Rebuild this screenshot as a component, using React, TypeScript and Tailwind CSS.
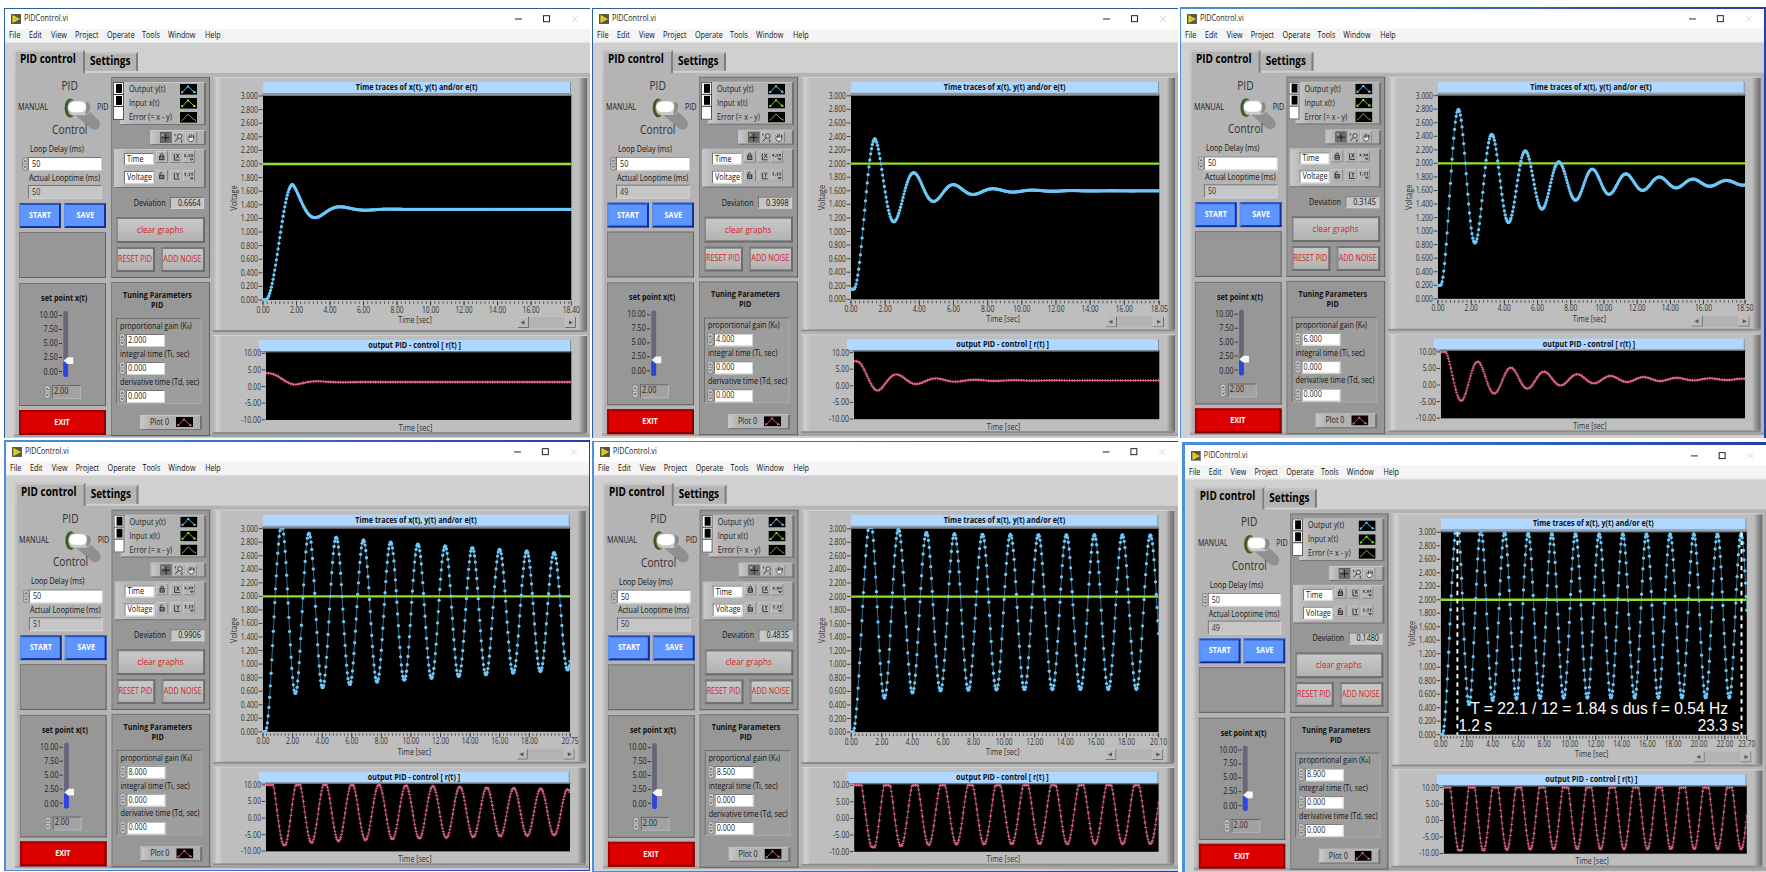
import React from "react";

type Run = {
  id: string;
  loop: string;
  deviation: string;
  gain: string;
  k: number;
  tMax: number;
  final: number;
  start: number;
  delay: number;
  peakTime: number;
  period: number;
  amp: number;
  decay: number;
  extra: number;
  annotated?: boolean;
};

const RUNS: Run[] = [
  { id: "a", loop: "50", deviation: "0.6664", gain: "2.000", k: 2, tMax: 18.4, final: 1.333, start: 0, delay: 0.15, peakTime: 1.77, period: 3.0, amp: 0.367, decay: 0.78, extra: 0 },
  { id: "b", loop: "49", deviation: "0.3998", gain: "4.000", k: 4, tMax: 18.05, final: 1.6, start: 0.15, delay: 0.15, peakTime: 1.41, period: 2.32, amp: 0.77, decay: 0.463, extra: 0 },
  { id: "c", loop: "50", deviation: "0.3145", gain: "6.000", k: 6, tMax: 18.5, final: 1.71, start: 0.2, delay: 0.15, peakTime: 1.24, period: 2.02, amp: 1.09, decay: 0.207, extra: 0 },
  { id: "d", loop: "51", deviation: "0.9906", gain: "8.000", k: 8, tMax: 20.75, final: 1.775, start: 0, delay: 0.15, peakTime: 1.27, period: 1.84, amp: 1.14, decay: 0.0145, extra: 0.14 },
  { id: "e", loop: "50", deviation: "0.4835", gain: "8.500", k: 8.5, tMax: 20.1, final: 1.77, start: 0, delay: 0.1, peakTime: 1.26, period: 1.83, amp: 1.15, decay: 0.0005, extra: 0.2 },
  { id: "f", loop: "49", deviation: "0.1480", gain: "8.900", k: 8.9, tMax: 23.7, final: 1.76, start: 0, delay: 0.1, peakTime: 1.266, period: 1.833, amp: 1.22, decay: 0.0002, extra: 0.16, annotated: true },
];

function response(r: Run, t: number) {
  if (t < r.delay) return r.start;
  if (t < r.peakTime) {
    const peak = r.final + r.amp + r.extra;
    const u = (t - r.delay) / (r.peakTime - r.delay);
    return r.start + ((peak - r.start) * (1 - Math.cos(Math.PI * u))) / 2;
  }
  const d = t - r.peakTime;
  const a = r.amp * Math.exp(-r.decay * d) + r.extra * Math.exp(-d / 1.8);
  return r.final + a * Math.cos((2 * Math.PI * d) / r.period);
}

function samples(r: Run) {
  const out: { t: number; y: number; u: number }[] = [];
  const n = Math.round(r.tMax / 0.05);
  for (let i = 0; i <= n; i++) {
    const t = i * 0.05;
    const y = Math.min(3.02, response(r, t));
    out.push({ t, y, u: Math.max(-10, Math.min(10, r.k * (2 - y))) });
  }
  return out;
}

const sans = "font-['Open_Sans','Noto_Sans',sans-serif]";

function Txt({ children, className = "origin-left text-[8.5px]" }: { children: React.ReactNode; className?: string }) {
  return <span className={`block w-max scale-x-[0.85] whitespace-nowrap leading-none ${className}`}>{children}</span>;
}

function TimeChart({ run }: { run: Run }) {
  const data = samples(run);
  const X = (t: number) => 34 + (t / run.tMax) * 308.3;
  const Y = (v: number) => 5 + (1 - v / 3) * 204;
  const rows = Array.from({ length: 16 }, (_, i) => 3 - i * 0.2);
  const labels: number[] = [];
  for (let t = 0; run.tMax - t >= 1; t += 2) labels.push(t);
  labels.push(run.tMax);
  const minor: number[] = [];
  for (let t = 0; t <= run.tMax; t += 0.25) minor.push(t);
  return (
    <svg className="relative z-10 -mt-[3px] block shrink-0 overflow-visible" width="358" height="236" viewBox="0 0 358 236">
      <defs>
        <clipPath id={`time-${run.id}`}>
          <rect x="33.5" y="4.5" width="309" height="205" />
        </clipPath>
      </defs>
      <rect x="33" y="3.5" width="310" height="1.5" fill="#777" />
      <rect x="34" y="5" width="308.3" height="204" fill="#000" />
      <g fontSize="8.4" fill="#303030">
        {rows.map((v) => (
          <g key={v}>
            <text x="29" y={Y(v) + 3} textAnchor="end" textLength="17.3" lengthAdjust="spacingAndGlyphs">{v.toFixed(3)}</text>
            <path d={`M29.8 ${Y(v)}h3.6`} stroke="#333" strokeWidth="0.9" />
          </g>
        ))}
        {labels.map((t) => (
          <g key={t}>
            <text x={X(t)} y="221.5" textAnchor="middle" textLength={t < 10 ? 13.2 : 17} lengthAdjust="spacingAndGlyphs">{t.toFixed(2)}</text>
            <path d={`M${X(t)} 210v4.6`} stroke="#333" strokeWidth="0.9" />
          </g>
        ))}
        {minor.map((t) => (
          <path key={t} d={`M${X(t)} 210.5v2.4`} stroke="#333" strokeWidth="0.8" />
        ))}
        <text x="186" y="232" textAnchor="middle" textLength="33.5" lengthAdjust="spacingAndGlyphs">Time [sec]</text>
        <text transform="translate(8 107) rotate(-90)" textAnchor="middle" textLength="25.5" lengthAdjust="spacingAndGlyphs">Voltage</text>
      </g>
      <g clipPath={`url(#time-${run.id})`}>
        <path d="M34 73h308.3" stroke="#92e02c" strokeWidth="2.3" />
        <polyline points={data.map((p) => `${X(p.t)},${Y(p.y)}`).join(" ")} fill="none" stroke="#6ccbf8" strokeWidth="0.9" strokeOpacity="0.6" />
        {data.map((p) => (
          <circle key={p.t} cx={X(p.t)} cy={Y(p.y)} r="1.65" fill="#6cc8f8" />
        ))}
      </g>
      {run.annotated && (
        <g fill="#fff" className="font-['Liberation_Sans',Arial,sans-serif]" fontSize="16">
          <path d="M50.6 5v204M337 5v204" stroke="#fff" strokeWidth="1.9" strokeDasharray="4.6 3.8" />
          <text x="63.5" y="187.8" textLength="260" lengthAdjust="spacingAndGlyphs">T = 22.1 / 12 = 1.84 s dus f = 0.54 Hz</text>
          <text x="51.8" y="205.500" textLength="33.5" lengthAdjust="spacingAndGlyphs">1.2 s</text>
          <text x="293" y="205.500" textLength="42" lengthAdjust="spacingAndGlyphs">23.3 s</text>
        </g>
      )}
    </svg>
  );
}

function ControlChart({ run }: { run: Run }) {
  const data = samples(run);
  const X = (t: number) => 37 + (t / run.tMax) * 305.3;
  const Y = (v: number) => 3.3 + ((10 - v) / 20) * 66.5;
  return (
    <svg className="relative z-10 -mt-[1.500px] block shrink-0 overflow-visible" width="358" height="84" viewBox="0 0 358 84">
      <defs>
        <clipPath id={`ctl-${run.id}`}>
          <rect x="37" y="2" width="305.3" height="68" />
        </clipPath>
      </defs>
      <rect x="36" y="1" width="307" height="1.5" fill="#777" />
      <rect x="37" y="2.3" width="305.3" height="67.7" fill="#000" />
      <g fontSize="8.4" fill="#303030">
        {[10, 5, 0, -5, -10].map((v) => (
          <g key={v}>
            <text x="32" y={Y(v) + 3} textAnchor="end" textLength={v === 10 ? 17 : v === -10 ? 20 : v === -5 ? 16.3 : 13.2} lengthAdjust="spacingAndGlyphs">{v.toFixed(2)}</text>
            <path d={`M32.8 ${Y(v)}h3.4`} stroke="#333" strokeWidth="0.9" />
          </g>
        ))}
        <text x="186.5" y="80.500" textAnchor="middle" textLength="33.5" lengthAdjust="spacingAndGlyphs">Time [sec]</text>
      </g>
      <g clipPath={`url(#ctl-${run.id})`} stroke="#e0628f" fill="none">
        <polyline points={data.map((p) => `${X(p.t)},${Y(p.u)}`).join(" ")} strokeWidth="1.2" strokeOpacity="0.7" />
        <path d={data.map((p) => `M${X(p.t) - 1.5} ${Y(p.u)}h3${Math.round(p.t * 20) % 3 === 0 ? `m-1.5 -1.6v3.2` : ""}`).join("")} strokeWidth="0.9" />
      </g>
    </svg>
  );
}

function PlotGlyph({ color, marks = true }: { color: string; marks?: boolean }) {
  return (
    <svg className="block shrink-0" width="17.4" height="10.6" viewBox="0 0 17.4 10.6">
      <rect width="17.4" height="10.6" fill="#000" />
      <path d="M1.4 8.6L3.2 7.6L8 2.2L13 7L16 8.6" fill="none" stroke={color} strokeWidth="0.9" />
      {marks && <path d="M1.2 7.2h2v2h-2zM7 1.4h2v2h-2zM13 7h2v2h-2z" fill={color} />}
    </svg>
  );
}

function Toggle() {
  return (
    <svg className="block shrink-0 overflow-visible" width="27" height="20" viewBox="0 0 27 20">
      <path d="M10 16L26 30C30 33 36 32 36 26C36 22 31 19 24 12Z" fill="#8c8c8c" fillOpacity="0.9" />
      <ellipse cx="6.2" cy="10" rx="5.6" ry="9.4" fill="#3c5a24" />
      <ellipse cx="8" cy="10" rx="4.6" ry="7.8" fill="#8fa07e" />
      <rect x="4" y="3.2" width="22.500" height="14" rx="6.500" fill="#c9c9c9" />
      <rect x="4.300" y="3.600" width="17.500" height="10.600" rx="5.300" fill="#fff" />
      <path d="M21.500 3.800q5.500 1 4.700 6.400t-5.200 6q2.500-6 .5-12.400z" fill="#8a8a8a" />
    </svg>
  );
}

function Spinner() {
  return (
    <svg className="block shrink-0" width="6.5" height="14" viewBox="0 0 6.5 14">
      <rect x="0.4" y="0.4" width="5.7" height="13.200" rx="2.8" fill="#c4c4c4" stroke="#777" strokeWidth="0.8" />
      <path d="M0.6 7h5.300" stroke="#777" strokeWidth="0.7" />
      <path d="M2 5L3.250 3.200L4.500 5M2 9L3.250 10.800L4.500 9" fill="none" stroke="#444" strokeWidth="0.8" />
    </svg>
  );
}

const sunken = "border border-t-[#747474] border-l-[#747474] border-b-[#d2d2d2] border-r-[#d2d2d2]";
const panel = "border-[1.5px] border-t-[#747474] border-l-[#7c7c7c] border-b-[#616161] border-r-[#616161] bg-[#979797]";
const tray = "bg-gradient-to-r from-[#c9c9c9] via-[#b4b4b4] via-15% to-[#b0b0b0] border border-t-[#c8c8c8] border-l-[#c4c4c4] border-b-[#737373] border-r-2 border-r-[#737373]";
const grayButton = "flex items-center justify-center border-2 border-b-[#6c6c6c] border-l-[#8a8a8a] border-r-[#6c6c6c] border-t-[#777] bg-gradient-to-b from-[#c9c9c9] to-[#b2b2b2]";

function NumberField({ label, value }: { label: React.ReactNode; value: string }) {
  return (
    <div className="flex flex-col">
      <div className="flex h-[15px] items-center pl-[3px] text-[#111]"><Txt>{label}</Txt></div>
      <div className="flex h-[13px] items-center pl-[1.500px]">
        <Spinner />
        <div className={`ml-[1px] flex h-[13px] w-[39px] items-center bg-white pl-[1px] text-[#222] ${sunken}`}><Txt>{value}</Txt></div>
      </div>
    </div>
  );
}

function SwitchColumn({ run }: { run: Run }) {
  return (
    <div className="flex w-[87px] flex-col">
      <div className="flex h-[25px] items-center justify-center pl-[14px] text-[#333]"><Txt className="text-[12px]">PID</Txt></div>
      <div className="flex h-[19px] items-center text-[#222]">
        <div className="-ml-[1px] w-[46px] shrink-0"><Txt className="origin-left scale-x-[0.9] text-[8.500px]">MANUAL</Txt></div>
        <Toggle />
        <div className="ml-[6px] w-[12px]"><Txt>PID</Txt></div>
      </div>
      <div className="relative flex h-[25px] items-center justify-center pl-[14px] text-[#333]"><Txt className="text-[12px]">Control</Txt></div>
      <div className="flex h-[15px] items-center pl-[10.500px] text-[#111]"><Txt>Loop Delay (ms)</Txt></div>
      <div className="flex h-[13.500px] items-center pl-[2.500px]">
        <Spinner />
        <div className={`flex h-[13.500px] w-[74px] items-center bg-white pl-[3px] text-[#222] ${sunken}`}><Txt>50</Txt></div>
      </div>
      <div className="flex h-[14.500px] items-center pl-[10px] text-[#111]"><Txt>Actual Looptime (ms)</Txt></div>
      <div className={`ml-[9px] flex h-[13.500px] w-[74px] items-center bg-[#c6c6c6] pl-[3px] text-[#333] ${sunken}`}><Txt>{run.loop}</Txt></div>
      <div className="mt-[4px] flex justify-between">
        {["START", "SAVE"].map((s) => (
          <div key={s} className="flex h-[25.500px] w-[42px] items-center justify-center border-2 border-b-[#12309c] border-l-[#5a8ff0] border-r-[#12309c] border-t-[#2a50c0] bg-[#5f95ff] font-bold text-white">
            <Txt className="text-[8.500px]">{s}</Txt>
          </div>
        ))}
      </div>
      <div className={`mt-[3.500px] h-[46.500px] ${panel}`} />
      <div className={`mt-[4.500px] flex h-[123.500px] flex-col ${panel}`}>
        <div className="flex h-[27.500px] items-center justify-center pl-[4px] pt-[1px] font-bold text-[#111]"><Txt className="text-[8.500px]">set point x(t)</Txt></div>
        <div className="flex h-[66px] shrink-0 pl-[20px]">
          <div className="flex w-[22px] flex-col items-end justify-between pb-[1px] text-[#222]">
            {["10.00", "7.50", "5.00", "2.50", "0.00"].map((v) => (
              <div key={v} className="flex items-center gap-[1px]"><Txt className="origin-right text-[8.500px]">{v}</Txt><i className="h-px w-[3px] bg-[#333]" /></div>
            ))}
          </div>
          <svg className="ml-[1px] block overflow-visible" width="12" height="66" viewBox="0 0 12 66">
            <rect x="0.3" y="0" width="4.800" height="66" rx="2.200" fill="#67677c" />
            <rect x="0.3" y="50" width="4.800" height="16" rx="2.200" fill="#2b45dd" />
            <path d="M0.500 49.800L4.500 46.200H10.300V53H4.500Z" fill="#f6f6f6" />
          </svg>
        </div>
        <div className="mt-[7.500px] flex items-center pl-[24px]">
          <Spinner />
          <div className="ml-[1px] flex h-[14px] w-[29px] items-center border border-b-[#b5b5b5] border-l-[#666] border-r-[#b5b5b5] border-t-[#666] bg-[#a2a2a2] pl-[1px] text-[#222]"><Txt>2.00</Txt></div>
        </div>
      </div>
      <div className="mt-[3.500px] flex h-[25px] items-center justify-center border-2 border-b-[#7c0000] border-l-[#a80000] border-r-[#7c0000] border-t-[#a80000] bg-[#dc0000] font-bold text-white">
        <Txt className="text-[8.500px]">EXIT</Txt>
      </div>
    </div>
  );
}

function ToolIcon({ kind }: { kind: "cross" | "zoom" | "hand" | "lock" | "unlock" | "x" | "y" | "fx" | "fy" }) {
  return (
    <svg className="block shrink-0" width="11.500" height="11.500" viewBox="0 0 12 12">
      <rect width="12" height="12" fill={kind === "cross" ? "#6c6c6c" : "#b6b6b6"} />
      <path d="M0 12V0H12" fill="none" stroke={kind === "cross" ? "#4a4a4a" : "#d8d8d8"} strokeWidth="1" />
      <path d="M12 0V12H0" fill="none" stroke="#808080" strokeWidth="1" />
      <g fill="none" stroke="#222" strokeWidth="0.900">
        {kind === "cross" && <path d="M6 2v8M2 6h8" stroke="#111" />}
        {kind === "zoom" && <><circle cx="7" cy="4.500" r="2.300" stroke="#334" fill="#c8c8e8" /><path d="M5.300 6.300L2 10M9 8v3M2 2v2" /></>}
        {kind === "hand" && <path d="M2.500 4l2.500 2.500V3.500M5 6V2.500M7 6V2.500M9 6V3.500V8L7.500 10H5L2.500 6.500" fill="#e8e8e8" strokeWidth="0.700" />}
        {kind === "lock" && <><path d="M4.700 5.500V3.500q1.300-2 2.600 0v2" /><rect x="3.800" y="5.500" width="4.400" height="3.600" fill="#999" /><path d="M4 7.300h4" strokeWidth="0.500" /></>}
        {kind === "unlock" && <><path d="M4.200 5.500V3.500q1.300-2 2.600 0" /><rect x="3.800" y="5.500" width="4.400" height="3.600" fill="#999" /><path d="M4 7.300h4" strokeWidth="0.500" /></>}
        {(kind === "x" || kind === "y") && <path d="M4.500 3v6.500H10" />}
        {kind === "x" && <path d="M6.500 3l3 4.500M9.500 3l-3 4.500" />}
        {kind === "y" && <path d="M6.500 3l1.500 2l1.500-2M8 5v3" />}
        {kind === "fx" && <path d="M1.500 3.500l1.500 2.500M3 3.500l-1.500 2.500M4.300 6h1M6 3.500l1.500 2.500M7.500 3.500l-1.500 2.500M8.700 3.500l1.500 2.500M10.200 3.500l-1.500 2.500M7.500 8.300h3l-1.500 1.500z" strokeWidth="0.800" />}
        {kind === "fy" && <path d="M1.500 3.500h1.600l-.8 1v2M4.300 6h1M6 3.500h1.600l-.8 1v2M8.700 3.500h1.600l-.8 1v2M7.500 8.300h3l-1.500 1.500z" strokeWidth="0.800" />}
      </g>
      {(kind === "x" || kind === "y" || kind === "cross") && <rect x="1.500" y="2" width="2" height="2" fill="#7be23a" />}
    </svg>
  );
}

function MiddleColumn({ run }: { run: Run }) {
  return (
    <div className="mt-[3.500px] flex w-[99px] flex-col">
      <div className={`flex h-[201.500px] flex-col ${panel}`}>
        <div className="mt-[4.500px] flex h-[43px]">
          <div className="z-10 ml-[1.500px] flex h-[38px] w-[11px] shrink-0 flex-col border border-[#555] bg-white">
            <div className="flex h-[12px] items-center justify-center border-b border-[#333]"><i className="h-[9px] w-[6px] bg-black" /></div>
            <div className="flex h-[12px] items-center justify-center border-b border-[#333]"><i className="h-[9px] w-[6px] bg-black" /></div>
          </div>
          <div className={`-ml-[4px] flex h-[43px] w-[86px] shrink-0 flex-col justify-center gap-[3.500px] pl-[8px] text-[#222] ${tray}`}>
            {[["Output y(t)", "#6cc8f8"], ["Input x(t)", "#8be02c"], ["Error (= x - y)", "#a8a468"]].map(([n, c], i) => (
              <div key={n} className="flex h-[10.600px] items-center">
                <div className="w-[51px] shrink-0"><Txt>{n}</Txt></div>
                <PlotGlyph color={c} marks={i < 2} />
              </div>
            ))}
          </div>
        </div>
        <div className={`ml-[38.500px] mt-[5px] flex h-[14.500px] w-[56px] items-center gap-[1.200px] pl-[9px] ${tray}`}>
          <ToolIcon kind="cross" /><ToolIcon kind="zoom" /><ToolIcon kind="hand" />
        </div>
        <div className={`ml-[2.500px] mt-[4px] flex h-[39px] w-[92px] flex-col justify-center gap-[6px] pl-[9px] ${tray}`}>
          <div className="flex items-start gap-[2px]">
            <div className={`flex h-[12.500px] w-[30px] items-center bg-white pl-[1.500px] text-[#111] ${sunken}`}><Txt>Time</Txt></div>
            <div className="-mt-[1.500px] flex gap-[2px]"><ToolIcon kind="lock" /><ToolIcon kind="x" /><ToolIcon kind="fx" /></div>
          </div>
          <div className="flex items-start gap-[2px]">
            <div className={`flex h-[12.500px] w-[30px] items-center bg-white pl-[1.500px] text-[#111] ${sunken}`}><Txt>Voltage</Txt></div>
            <div className="-mt-[1.500px] flex gap-[2px]"><ToolIcon kind="unlock" /><ToolIcon kind="y" /><ToolIcon kind="fy" /></div>
          </div>
        </div>
        <div className="mt-[9.500px] flex h-[12px] items-center justify-end pr-[5px] text-[#111]">
          <Txt className="origin-right text-[8.500px]">Deviation</Txt>
          <div className={`ml-[4px] flex h-[12px] w-[34px] items-center justify-end bg-[#c6c6c6] pr-[2px] ${sunken}`}><Txt className="origin-right text-[8.500px]">{run.deviation}</Txt></div>
        </div>
        <div className={`mx-[4px] mt-[8px] h-[26px] shrink-0 text-[#cf1f24] ${grayButton}`}><Txt className="text-[9.500px]">clear graphs</Txt></div>
        <div className="mx-[4px] mt-[4px] flex justify-between text-[#cf1f24]">
          <div className={`h-[25px] w-[39.500px] ${grayButton}`}><Txt className="text-[8.500px]">RESET PID</Txt></div>
          <div className={`h-[25px] w-[44px] ${grayButton}`}><Txt className="text-[8.500px]">ADD NOISE</Txt></div>
        </div>
      </div>
      <div className={`mt-[4px] flex h-[153.500px] flex-col ${panel}`}>
        <div className="mt-[8px] flex h-[18px] shrink-0 flex-col items-center justify-between pr-[6px] font-bold text-[#111]">
          <Txt className="text-[8.500px]">Tuning Parameters</Txt>
          <Txt className="text-[8.500px]">PID</Txt>
        </div>
        <div className="ml-[4.500px] mt-[8.500px] flex h-[86.500px] w-[85.500px] shrink-0 flex-col border border-b-[#aaa] border-l-[#6e6e6e] border-r-[#aaa] border-t-[#6e6e6e] bg-[#9d9d9d]">
          <NumberField label={<>proportional gain (K<span className="text-[5px]">R</span>)</>} value={run.gain} />
          <NumberField label="integral time (Ti, sec)" value="0.000" />
          <NumberField label="derivative time (Td, sec)" value="0.000" />
        </div>
        <div className={`ml-[28.500px] mt-[10.500px] flex h-[15px] w-[62px] items-center pl-[9px] text-[#222] ${tray}`}>
          <div className="w-[26px]"><Txt>Plot 0</Txt></div>
          <PlotGlyph color="#d85c8c" />
        </div>
      </div>
    </div>
  );
}

function GraphPanel({ title, height, wide, children }: { title: string; height: string; wide?: boolean; children: React.ReactNode }) {
  return (
    <div className={`flex w-[374px] border-b-2 border-t border-b-[#8b8b8b] border-t-[#d2d2d2] bg-[#bebebe] ${height}`}>
      <div className="w-[8px] shrink-0 bg-gradient-to-r from-[#b2b2b2] via-[#d0d0d0] to-[#c4c4c4]" />
      <div className="flex w-[358px] shrink-0 flex-col pl-[8px]">
        <div className={`mt-[4.500px] flex h-[11.500px] shrink-0 items-center justify-center border-b border-r border-[#7b8ea2] bg-[#afd7ff] font-bold text-[#111] ${wide ? "ml-[30px] w-[312.300px]" : "ml-[34px] w-[308.300px]"}`}>
          <Txt className="text-[8.500px]">{title}</Txt>
        </div>
        {children}
      </div>
      <div className="w-[8px] shrink-0 bg-gradient-to-r from-[#b8b8b8] via-[#8e8e8e] to-[#6a6a6a]" />
    </div>
  );
}

function ScrollStub() {
  return (
    <div className="absolute bottom-[4px] right-[10.500px] z-20 flex h-[11px] w-[58.500px] justify-between bg-[#b3b3b3]">
      {["M6.500 3.500v4l-4-2z", "M4 3.500v4l4-2z"].map((d) => (
        <svg key={d} width="11" height="11" viewBox="0 0 11 11">
          <rect x="0.500" y="0.500" width="10" height="10" fill="#bababa" stroke="#d0d0d0" strokeWidth="0.600" />
          <path d="M10.500 0v10.500H0" fill="none" stroke="#6e6e6e" />
          <path d={d} fill="#555" />
        </svg>
      ))}
    </div>
  );
}

function VI({ run }: { run: Run }) {
  return (
    <div className="flex h-[436px] w-[590px] flex-col bg-[#d0d0d0]">
      <div className="flex h-[21px] shrink-0 items-center bg-white text-[#222]">
        <svg className="ml-[7px] block" width="10" height="10" viewBox="0 0 10 10">
          <rect width="10" height="10" fill="#55574e" />
          <path d="M1.500 1L9 5L1.500 9Z" fill="#f4d51c" />
          <path d="M3 4.900h3" stroke="#b08a10" strokeWidth="0.800" />
        </svg>
        <div className="ml-[3px] w-[491px]"><Txt>PIDControl.vi</Txt></div>
        <svg className="block" width="66" height="10" viewBox="0 0 66 10">
          <path d="M0 5h7" stroke="#222" />
          <rect x="28.500" y="1.700" width="6" height="6" fill="none" stroke="#222" />
          <path d="M57 2l6 6M63 2l-6 6" stroke="#d4d4d4" strokeWidth="0.900" />
        </svg>
      </div>
      <div className="flex h-[13px] shrink-0 items-center bg-[#f4f4f4] pl-[5.300px] text-[#111]">
        <div className="w-[20px]"><Txt>File</Txt></div>
        <div className="w-[21.300px]"><Txt>Edit</Txt></div>
        <div className="w-[24.400px]"><Txt>View</Txt></div>
        <div className="w-[32px]"><Txt>Project</Txt></div>
        <div className="w-[35px]"><Txt>Operate</Txt></div>
        <div className="w-[26.300px]"><Txt>Tools</Txt></div>
        <div className="w-[36.700px]"><Txt>Window</Txt></div>
        <div><Txt>Help</Txt></div>
      </div>
      <div className="flex h-[31px] shrink-0 items-start border-t border-[#e4e4e4] pl-[9.500px] pt-[7px] font-bold text-black">
        <div className="h-[23.500px] w-[71px] border-l-2 border-r-2 border-t-2 border-l-[#c4c4c4] border-r-[#7e7e7e] border-t-[#c8c8c8] bg-[#b4b4b4] pl-[4px] pt-[1px]"><Txt className="origin-left text-[11.800px]">PID control</Txt></div>
        <div className="mt-[1.500px] h-[19px] w-[53.500px] border-r-2 border-t-2 border-r-[#7e7e7e] border-t-[#c4c4c4] bg-[#b4b4b4] pl-[5px] pt-[1px]"><Txt className="origin-left text-[11.800px]">Settings</Txt></div>
      </div>
      <div className="ml-[9.500px] flex h-[364px] shrink-0 bg-[#b4b4b4] pl-[5.500px] shadow-[inset_0_-3px_0_#a2a2a2,inset_2px_0_0_#c0c0c0]">
        <SwitchColumn run={run} />
        <div className="ml-[4.500px]"><MiddleColumn run={run} /></div>
        <div className="ml-[3px] mt-[3.500px] flex flex-col gap-[2.500px]">
          <div className="relative">
            <GraphPanel title="Time traces of x(t), y(t) and/or e(t)" height="h-[255.500px]"><TimeChart run={run} /></GraphPanel>
            <ScrollStub />
          </div>
          <GraphPanel title="output PID - control [ r(t) ]" height="h-[99.500px]" wide><ControlChart run={run} /></GraphPanel>
        </div>
      </div>
    </div>
  );
}

const blueFrame = "bg-gradient-to-r from-[#4a90dc] to-[#2340a4]";

export default function App() {
  return (
    <div className={`flex h-[872px] w-[1766px] flex-col overflow-hidden bg-white text-[#222] ${sans}`}>
      <div className="flex h-[440px] shrink-0 items-start pl-[4px]">
        <div className="mt-[8px] h-[430px] w-[586px] overflow-hidden border-l border-t border-[#2f6098]"><div className="-ml-px -mt-px"><VI run={RUNS[0]} /></div></div>
        <div className="ml-[2px] mt-[8px] h-[429.500px] w-[586px] overflow-hidden border-l border-t border-[#2f6098]"><div className="-ml-px -mt-[1.500px] origin-top-left scale-y-[0.998]"><VI run={RUNS[1]} /></div></div>
        <div className={`ml-[2px] mt-[7px] h-[430.500px] w-[586px] overflow-hidden pl-px pr-[2px] pt-[2px] ${blueFrame}`}><div className="h-full overflow-hidden"><div className="-ml-px -mt-px origin-top-left scale-[0.996]"><VI run={RUNS[2]} /></div></div></div>
      </div>
      <div className="flex h-[432px] shrink-0 items-start pl-[4px]">
        <div className={`h-[431px] w-[586px] overflow-hidden p-[1.500px] ${blueFrame}`}><div className="h-full overflow-hidden"><div className="-ml-px -mt-px origin-top-left scale-[0.996]"><VI run={RUNS[3]} /></div></div></div>
        <div className={`ml-[2px] mt-[1px] h-[431px] w-[586px] overflow-hidden pb-px pl-[1.500px] pt-[1px] ${blueFrame}`}><div className="h-full overflow-hidden"><div className="-ml-[0.500px] -mt-[1.200px] origin-top-left scale-[0.997]"><VI run={RUNS[4]} /></div></div></div>
        <div className={`ml-[4px] mt-[2px] h-[430px] w-[584px] overflow-hidden pl-[2.500px] pt-[3px] ${blueFrame}`}><div className="h-full overflow-hidden"><div className="-ml-[0.500px] -mt-[0.500px] origin-top-left scale-[0.992]"><VI run={RUNS[5]} /></div></div></div>
      </div>
    </div>
  );
}
